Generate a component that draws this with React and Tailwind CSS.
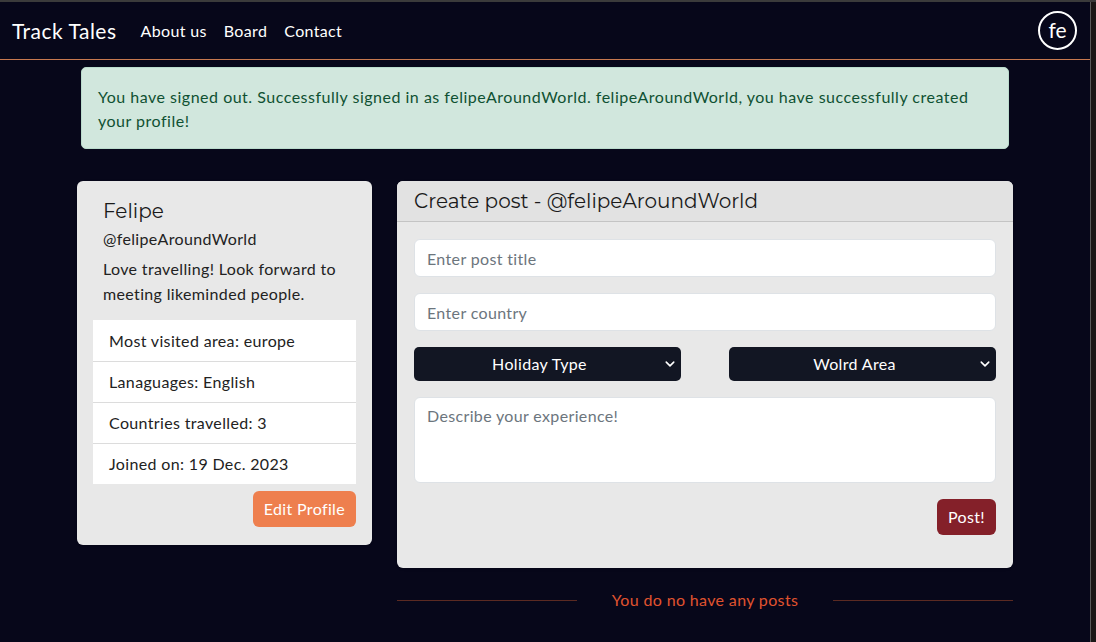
import { useState } from 'react';

const stats = [
    'Most visited area: europe',
    'Lanaguages: English',
    'Countries travelled: 3',
    'Joined on: 19 Dec. 2023',
];

function Chevron() {
    return (
        <svg width="10" height="10" viewBox="0 0 16 16" className="absolute right-[6px] top-1/2 -translate-y-1/2 pointer-events-none">
            <path d="M2 5l6 6 6-6" fill="none" stroke="#fff" strokeWidth="2.5" strokeLinecap="round" strokeLinejoin="round" />
        </svg>
    );
}

function SelectBox({ label }) {
    return (
        <div className="relative flex-1">
            <div className="h-[34px] rounded-[5px] bg-[#121623] text-white text-[16px] flex items-center justify-center pl-[12px] pr-[28px]">
                {label}
            </div>
            <Chevron />
        </div>
    );
}

export default function App() {
    const [title, setTitle] = useState('');
    const [country, setCountry] = useState('');
    const [body, setBody] = useState('');

    return (
        <div className="w-[1096px] h-[642px] overflow-hidden bg-[#07071a] border-t-2 border-[#3b3b3b] flex font-['Lato',sans-serif] tracking-[0.35px]">
            <div className="w-[1090px] flex flex-col">
                {/* Navbar */}
                <nav className="h-[58px] border-b border-[#c7784f] flex items-center px-[12px] shrink-0">
                    <span className="text-white text-[21px] tracking-[0.5px] mr-[24px]">Track Tales</span>
                    <div className="flex gap-[17px] text-white text-[16px]">
                        <a href="#">About us</a>
                        <a href="#">Board</a>
                        <a href="#">Contact</a>
                    </div>
                    <div className="ml-auto mr-[1px] w-[39px] h-[39px] rounded-full border-2 border-white text-white text-[21px] tracking-normal flex items-center justify-center pb-[2px]">
                        fe
                    </div>
                </nav>

                <main className="w-[936px] mx-auto flex flex-col">
                    {/* Alert */}
                    <div className="mx-[4px] mt-[7px] rounded-[5px] bg-[#d1e7dd] border border-[#badbcc] text-[#0f5132] text-[16px] leading-[24px] tracking-[0.5px] px-[16px] pt-[17px] pb-[15px]">
                        You have signed out. Successfully signed in as felipeAroundWorld. felipeAroundWorld, you have successfully created your profile!
                    </div>

                    <div className="flex gap-[25px] mt-[32px] items-start">
                        {/* Profile */}
                        <div className="w-[295px] bg-[#e8e8e8] rounded-[6px] px-[16px] pt-[17px] pb-[18px] shadow">
                            <h2 className="text-[20px] text-[#1a1a1a] px-[10px] leading-[26px] tracking-normal font-['Montserrat','Lato',sans-serif]">Felipe</h2>
                            <div className="text-[16px] text-[#222] px-[10px] mt-[3px] leading-[24px]">@felipeAroundWorld</div>
                            <p className="text-[16px] text-[#222] px-[10px] mt-[5px] leading-[25px]">
                                Love travelling! Look forward to meeting likeminded people.
                            </p>
                            <ul className="mt-[14px] bg-white">
                                {stats.map((s, i) => (
                                    <li key={s} className={`h-[41px] flex items-center px-[16px] text-[16px] text-[#222] ${i > 0 ? 'border-t border-[#dcdcdc]' : ''}`}>
                                        {s}
                                    </li>
                                ))}
                            </ul>
                            <div className="flex justify-end mt-[7px]">
                                <button className="h-[36px] px-[11px] rounded-[6px] bg-[#ee7f4e] text-white text-[16px]">Edit Profile</button>
                            </div>
                        </div>

                        {/* Create post */}
                        <div className="flex-1 flex flex-col">
                            <div className="bg-[#e8e8e8] rounded-[6px] shadow overflow-hidden">
                                <div className="h-[41px] bg-[#e2e2e2] border-b border-[#c4c4c4] flex items-center px-[17px] text-[20px] tracking-normal text-[#1a1a1a] font-['Montserrat','Lato',sans-serif]">
                                    Create post - @felipeAroundWorld
                                </div>
                                <div className="px-[17px] pt-[17px] pb-[33px] flex flex-col">
                                    <input
                                        value={title}
                                        onChange={(e) => setTitle(e.target.value)}
                                        placeholder="Enter post title"
                                        className="h-[38px] rounded-[6px] bg-white border border-[#dee2e6] px-[12px] text-[16px] placeholder:text-[#6c757d] outline-none"
                                    />
                                    <input
                                        value={country}
                                        onChange={(e) => setCountry(e.target.value)}
                                        placeholder="Enter country"
                                        className="mt-[16px] h-[38px] rounded-[6px] bg-white border border-[#dee2e6] px-[12px] text-[16px] placeholder:text-[#6c757d] outline-none"
                                    />
                                    <div className="mt-[16px] flex gap-[48px]">
                                        <SelectBox label="Holiday Type" />
                                        <SelectBox label="Wolrd Area" />
                                    </div>
                                    <textarea
                                        value={body}
                                        onChange={(e) => setBody(e.target.value)}
                                        placeholder="Describe your experience!"
                                        className="mt-[16px] h-[86px] resize-none rounded-[6px] bg-white border border-[#dee2e6] px-[12px] py-[6px] text-[16px] placeholder:text-[#6c757d] outline-none"
                                    />
                                    <div className="flex justify-end mt-[16px]">
                                        <button className="h-[36px] px-[11px] rounded-[6px] bg-[#842029] text-white text-[16px]">Post!</button>
                                    </div>
                                </div>
                            </div>

                            <div className="mt-[20px] flex items-center">
                                <div className="w-[180px] h-px bg-[#5b2a22]" />
                                <div className="flex-1 text-center text-[#e0532f] text-[16px]">You do no have any posts</div>
                                <div className="w-[180px] h-px bg-[#5b2a22]" />
                            </div>
                        </div>
                    </div>
                </main>
            </div>
            <div className="flex-1 border-l border-[#5a5a5a] bg-[#1a1716]" />
        </div>
    );
}
